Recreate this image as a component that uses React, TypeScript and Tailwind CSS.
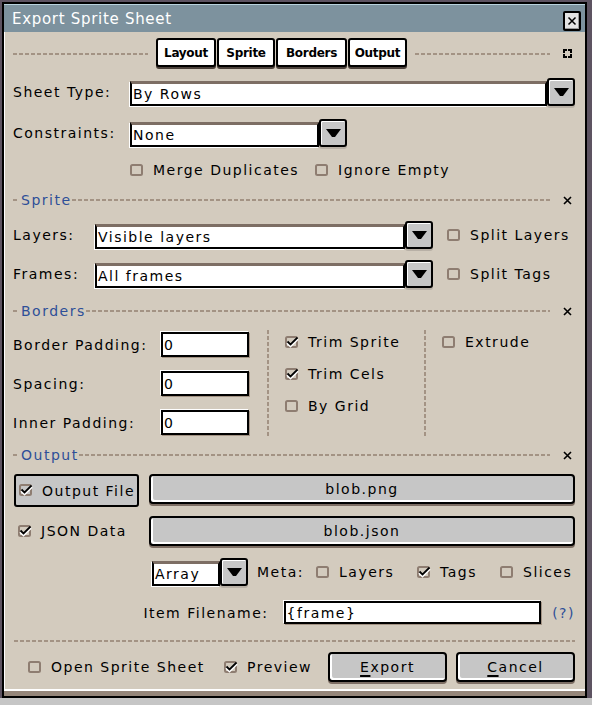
import type { ReactNode } from "react";

const txt = "text-[14px] leading-none tracking-[1.5px] whitespace-nowrap";
const dashH = "h-[2px] bg-[repeating-linear-gradient(90deg,#a39384_0_4px,transparent_4px_6px)]";
const dashV = "w-[2px] bg-[repeating-linear-gradient(180deg,#a39384_0_4px,transparent_4px_6px)]";

function Box({ on }: { on?: boolean }) {
  return (
    <svg width="14" height="13" viewBox="0 0 14 13" className="shrink-0">
      <rect x="1" y="1" width="11" height="10" rx="1.5" fill="none" stroke="#8e7d71" strokeWidth="2" />
      {on && (
        <>
          <path d="M2.5 6.5 L5.5 9.5 L12.5 2.5" fill="none" stroke="#fff" strokeWidth="3.2" />
          <path d="M2.5 5.5 L5.5 8.5 L12.5 1.5" fill="none" stroke="#000" strokeWidth="1.8" />
        </>
      )}
    </svg>
  );
}

function Check({ on, label, className = "" }: { on?: boolean; label: string; className?: string }) {
  return (
    <div className={`flex items-center gap-[9px] ${className}`}>
      <Box on={on} />
      <span className={txt}>{label}</span>
    </div>
  );
}

function XIcon({ className = "" }: { className?: string }) {
  return (
    <svg width="9" height="9" viewBox="0 0 9 9" className={`shrink-0 ${className}`}>
      <path d="M1 1l7 7M8 1l-7 7" stroke="#000" strokeWidth="1.6" />
    </svg>
  );
}

function DropButton() {
  return (
    <div className="w-[28px] h-[28px] shrink-0 bg-[#c6c6c6] border-2 border-black rounded-[3px] shadow-[inset_1px_1px_0_#fff,0_2px_0_#b8b0a6] flex items-center justify-center">
      <svg width="15" height="8" viewBox="0 0 15 8">
        <path d="M0 0h15l-6 8h-3z" fill="#000" />
      </svg>
    </div>
  );
}

function Combo({ field, value }: { field: string; value: string }) {
  return (
    <div className="flex items-start">
      <div
        className={`${field} mt-[3px] h-[25px] bg-white border-2 border-black border-t-[3px] border-t-[#7d6e64] shadow-[-1px_1px_0_#fff] flex items-center pl-[1px] ${txt}`}
      >
        {value}
      </div>
      <DropButton />
    </div>
  );
}

function Entry({ className = "", value }: { className?: string; value: string }) {
  return (
    <div
      className={`${className} bg-white border-2 border-black shadow-[-1px_-1px_0_#fff,1px_1px_0_#a39384] flex items-center pl-[1px] ${txt}`}
    >
      {value}
    </div>
  );
}

function Btn({ children, className = "" }: { children: ReactNode; className?: string }) {
  return (
    <div
      className={`${className} h-[30px] bg-[#c6c6c6] border-2 border-black rounded-[4px] shadow-[inset_2px_-2px_0_#fff,0_2px_0_#7d6e64] flex items-center justify-center ${txt}`}
    >
      {children}
    </div>
  );
}

function Section({ title }: { title: string }) {
  return (
    <div className="flex items-center h-[16px]">
      <div className={`${dashH} w-[6px] mr-[2px]`} />
      <span className={`${txt} text-[#2e4f98]`}>{title}</span>
      <div className={`${dashH} flex-1`} />
      <XIcon className="ml-[13px] mr-[3px]" />
    </div>
  );
}

function Tab({ label, className }: { label: string; className: string }) {
  return (
    <div
      className={`${className} h-[29px] bg-white border-2 border-black rounded-[3px] shadow-[0_2px_0_#4a403a] flex items-center justify-center text-[12px] font-bold tracking-[-0.3px] leading-none`}
    >
      {label}
    </div>
  );
}

export default function App() {
  return (
    <div className="w-[592px] h-[705px] bg-[#5d5361] flex flex-col font-['DejaVu_Sans',sans-serif] text-black overflow-hidden">
      <div className="ml-[2px] mt-[2px] w-[585px] h-[696px] border-2 border-black flex flex-col bg-[#d3cbbe] shrink-0">
        {/* title bar */}
        <div className="h-[28px] bg-[#7d929e] border-t border-[#b9d3de] flex items-center justify-between pl-[8px] pr-[4px]">
          <span className="text-white text-[15px] tracking-[0.7px] leading-none mt-[2px]">Export Sprite Sheet</span>
          <div className="w-[18px] h-[20px] mt-[4px] bg-[#e4e4e4] border-2 border-black rounded-[2px] shadow-[inset_-1px_-1px_0_#9a9a9a] flex items-center justify-center">
            <svg width="10" height="10" viewBox="0 0 10 10">
              <path d="M1.5 1.5l7 7M8.5 1.5l-7 7" stroke="#000" strokeWidth="1.5" />
            </svg>
          </div>
        </div>

        {/* body */}
        <div className="flex-1 flex flex-col pl-[9px] pr-[10px] shadow-[inset_1px_0_0_#fff]">
          <div className="mt-[6px] h-[31px] flex items-start">
            <div className={`${dashH} w-[135px] mt-[15px]`} />
            <div className="ml-[8px] flex gap-[1px]">
              <Tab label="Layout" className="w-[60px]" />
              <Tab label="Sprite" className="w-[58px]" />
              <Tab label="Borders" className="w-[71px]" />
              <Tab label="Output" className="w-[59px]" />
            </div>
            <div className={`${dashH} w-[135px] ml-[8px] mt-[15px]`} />
            <svg width="9" height="9" viewBox="0 0 9 9" className="ml-[13px] mt-[11px]">
              <path d="M0 0h4v2H2v2H0z M5 0h4v4H7V2H5z M0 5h2v2h2v2H0z M7 5h2v4H5V7h2z" fill="#000" />
            </svg>
          </div>

          <div className="mt-[9px] h-[28px] flex items-center">
            <span className={`${txt} w-[117px]`}>Sheet Type:</span>
            <Combo field="w-[417px]" value="By Rows" />
          </div>

          <div className="mt-[13px] h-[28px] flex items-center">
            <span className={`${txt} w-[117px]`}>Constraints:</span>
            <Combo field="w-[189px]" value="None" />
          </div>

          <div className="mt-[13px] h-[20px] flex items-center pl-[117px]">
            <Check label="Merge Duplicates" className="w-[185px]" />
            <Check label="Ignore Empty" />
          </div>

          <div className="mt-[12px]">
            <Section title="Sprite" />
          </div>

          <div className="mt-[13px] h-[28px] flex items-center">
            <span className={`${txt} w-[82px]`}>Layers:</span>
            <Combo field="w-[310px]" value="Visible layers" />
            <Check label="Split Layers" className="ml-[14px]" />
          </div>

          <div className="mt-[11px] h-[28px] flex items-center">
            <span className={`${txt} w-[82px]`}>Frames:</span>
            <Combo field="w-[310px]" value="All frames" />
            <Check label="Split Tags" className="ml-[14px]" />
          </div>

          <div className="mt-[15px]">
            <Section title="Borders" />
          </div>

          <div className="mt-[3px] h-[118px] flex items-start">
            <div className="w-[254px] flex flex-col gap-[14px] pt-[10px]">
              <div className="h-[25px] flex items-center">
                <span className={`${txt} w-[148px]`}>Border Padding:</span>
                <Entry className="w-[88px] h-[25px]" value="0" />
              </div>
              <div className="h-[25px] flex items-center">
                <span className={`${txt} w-[148px]`}>Spacing:</span>
                <Entry className="w-[88px] h-[25px]" value="0" />
              </div>
              <div className="h-[25px] flex items-center">
                <span className={`${txt} w-[148px]`}>Inner Padding:</span>
                <Entry className="w-[88px] h-[25px]" value="0" />
              </div>
            </div>
            <div className={`${dashV} h-[107px] mt-[8px]`} />
            <div className="w-[155px] pl-[16px] pt-[10px] flex flex-col gap-[12px]">
              <Check on label="Trim Sprite" className="h-[20px]" />
              <Check on label="Trim Cels" className="h-[20px]" />
              <Check label="By Grid" className="h-[20px]" />
            </div>
            <div className={`${dashV} h-[107px] mt-[8px]`} />
            <div className="pl-[16px] pt-[10px]">
              <Check label="Extrude" className="h-[20px]" />
            </div>
          </div>

          <div className="mt-[7px]">
            <Section title="Output" />
          </div>

          <div className="mt-[11px] h-[33px] flex items-start">
            <div className="ml-[1px] w-[125px] h-[33px] bg-[#c6c6c6] border-2 border-black rounded-[3px] flex items-center pl-[3px]">
              <Check on label="Output File" />
            </div>
            <Btn className="ml-[10px] flex-1">blob.png</Btn>
          </div>

          <div className="mt-[9px] h-[30px] flex items-center">
            <Check on label="JSON Data" className="w-[136px] pl-[5px]" />
            <Btn className="flex-1">blob.json</Btn>
          </div>

          <div className="mt-[12px] h-[28px] flex items-center pl-[139px]">
            <Combo field="w-[68px]" value="Array" />
            <span className={`${txt} ml-[9px] w-[59px]`}>Meta:</span>
            <Check label="Layers" className="w-[101px]" />
            <Check on label="Tags" className="w-[83px]" />
            <Check label="Slices" />
          </div>

          <div className="mt-[15px] h-[23px] flex items-center">
            <span className={`${txt} w-[272px] text-right pr-[15px]`}>Item Filename:</span>
            <Entry className="w-[259px] h-[23px]" value="{frame}" />
            <span className={`${txt} ml-[11px] text-[#2e4f98]`}>(?)</span>
          </div>

          <div className={`${dashH} mt-[16px] ml-[1px]`} />

          <div className="mt-[10px] h-[30px] flex items-center pl-[15px]">
            <Check label="Open Sprite Sheet" className="w-[196px]" />
            <Check on label="Preview" className="w-[104px]" />
            <Btn className="w-[119px]">
              <span>
                <span className="underline underline-offset-[3px] decoration-2">E</span>xport
              </span>
            </Btn>
            <Btn className="w-[119px] ml-[9px]">
              <span>
                <span className="underline underline-offset-[3px] decoration-2">C</span>ancel
              </span>
            </Btn>
          </div>
        </div>
        <div className="h-[2px] bg-white" />
        <div className="h-[5px] bg-[#95867a]" />
      </div>
      <div className="flex-1 bg-[#c6c6c6]" />
    </div>
  );
}
